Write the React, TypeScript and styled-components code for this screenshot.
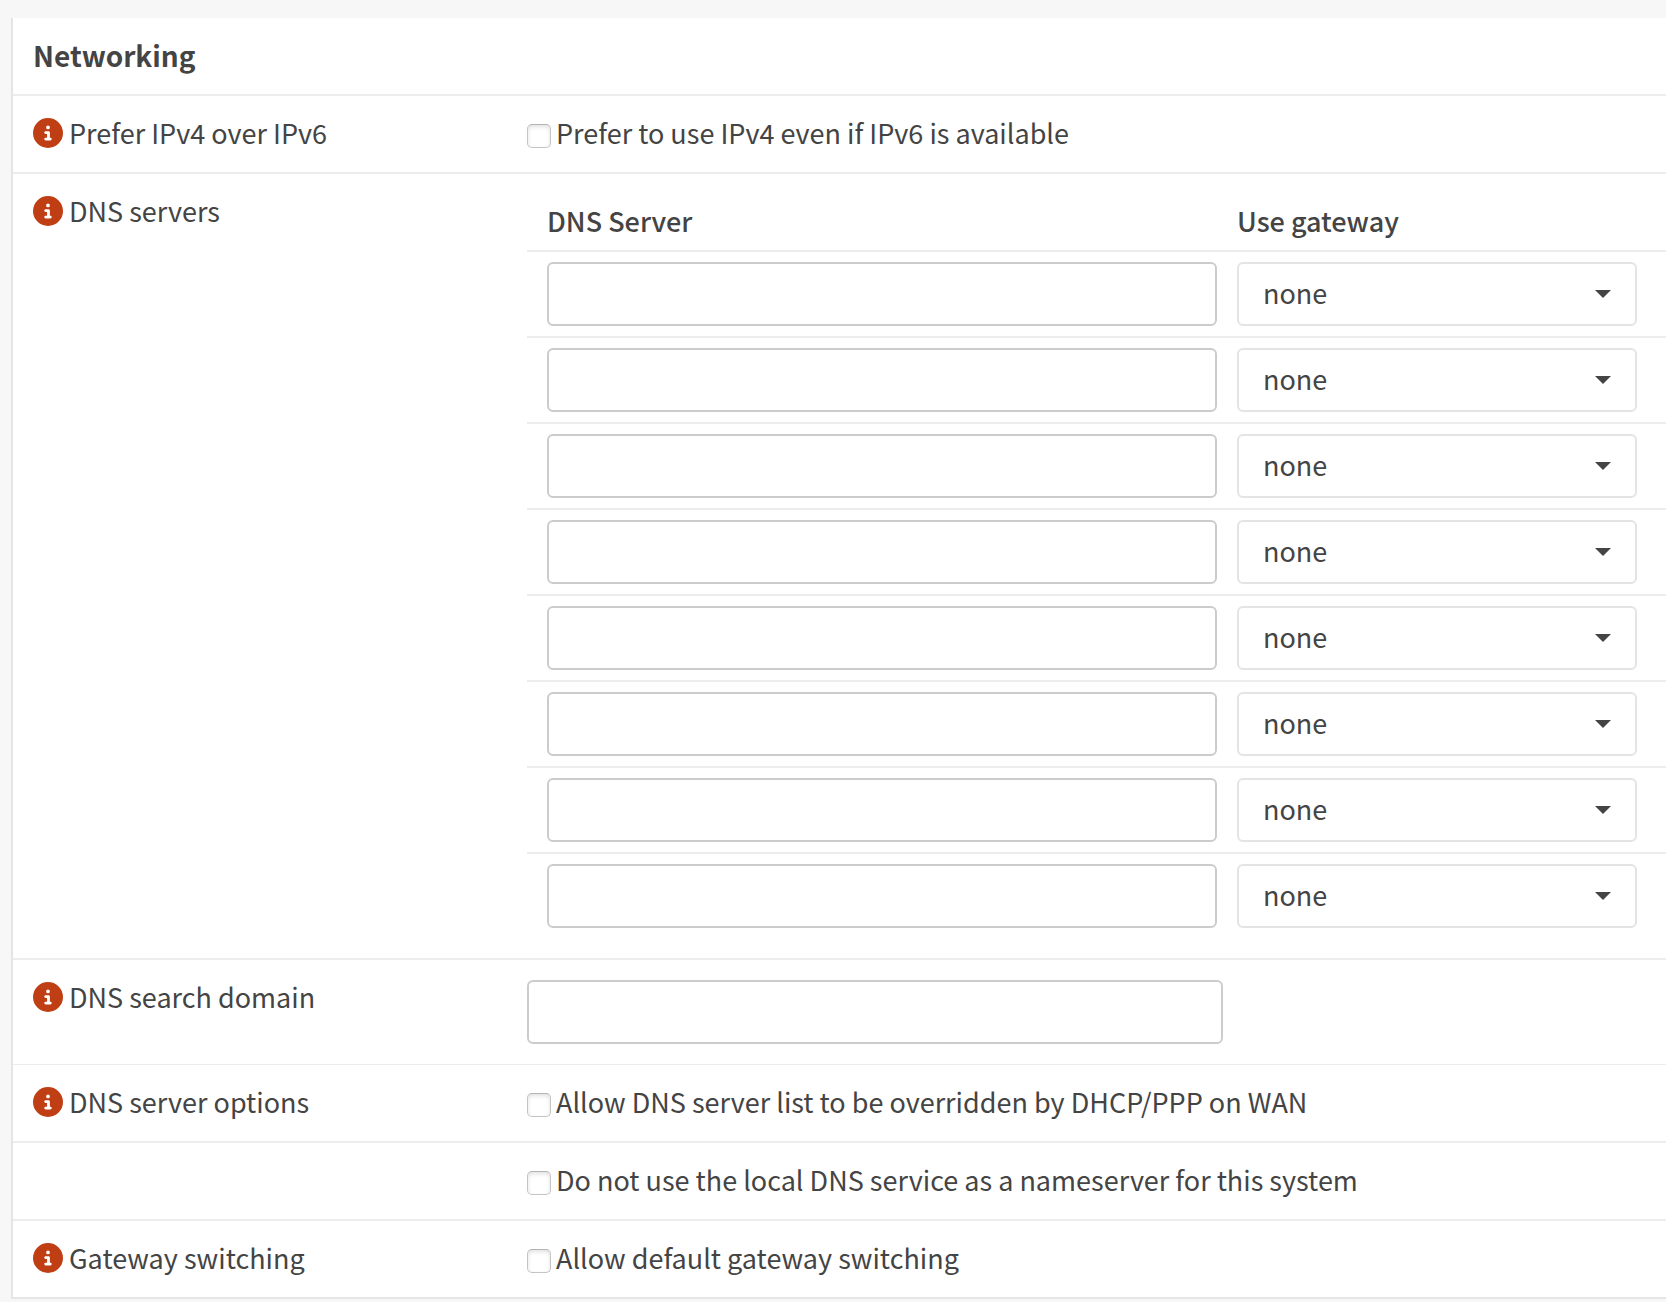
import React, { useId } from "react";
import styled, { createGlobalStyle } from "styled-components";
import { FaCircleInfo } from "react-icons/fa6";

const GlobalStyle = createGlobalStyle`
  *, *::before, *::after { box-sizing: border-box; }
  body {
    margin: 0;
    background: #f7f7f7;
    color: #444;
    font-family: "Noto Sans CJK SC", "Open Sans", sans-serif;
    font-size: 27px;
    line-height: 34px;
  }
`;

const Page = styled.main`
  padding: 18px 0 3px 11px;
`;

const Panel = styled.section`
  background: #fff;
  border-left: 2px solid #e5e5e5;
  border-bottom: 2px solid #e5e5e5;
`;

const PanelTitle = styled.h2`
  margin: 0;
  padding: 20px 20px 22px;
  font-size: 28px;
  line-height: 34px;
  font-weight: 700;
`;

const Row = styled.div<{ $line?: number }>`
  display: grid;
  grid-template-columns: 494px minmax(0, 1fr);
  align-items: start;
  min-height: ${(p) => 76 + (p.$line ?? 2)}px;
  padding: 20px 0 20px 20px;
  border-top: ${(p) => p.$line ?? 2}px solid #ededed;
`;

const RowLabel = styled.div`
  display: flex;
  align-items: flex-start;
  gap: 6px;
`;

const HelpButton = styled.button`
  display: flex;
  padding: 0;
  border: 0;
  background: none;
  color: #c03e14;
  cursor: pointer;
  margin-top: 2px;

  svg {
    width: 30px;
    height: 30px;
  }
`;

const CheckLabel = styled.label`
  display: flex;
  align-items: center;
  gap: 5px;
`;

const CheckBox = styled.input`
  appearance: none;
  width: 24px;
  height: 24px;
  margin: 6px 0 0;
  border: 1px solid #c4c4c4;
  border-top-color: #b4b4b4;
  border-radius: 5px;
  background: #fff;
  box-shadow: inset 0 2px 4px rgba(0, 0, 0, 0.12);

  &:checked {
    background: #c03e14;
  }
`;

const TextInput = styled.input`
  display: block;
  width: 100%;
  max-width: 696px;
  height: 64px;
  padding: 12px 24px;
  border: 2px solid #ccc;
  border-radius: 6px;
  background: #fff;
  color: inherit;
  font: inherit;
`;

const ServerTable = styled.table`
  width: 100%;
  border-collapse: separate;
  border-spacing: 0;
  table-layout: fixed;

  th {
    padding: 0 0 2px 20px;
    height: 56px;
    text-align: left;
    font-weight: 500;
  }

  td {
    padding: 10px 0 10px 20px;
    border-top: 2px solid #ededed;
  }
`;

const ServerColumn = styled.col`
  width: 690px;
`;

const SelectBox = styled.div`
  position: relative;
  width: 400px;

  &::after {
    content: "";
    position: absolute;
    top: 28px;
    right: 26px;
    border: 8px solid transparent;
    border-top-color: #444;
    border-bottom-width: 0;
    pointer-events: none;
  }
`;

const Select = styled.select`
  appearance: none;
  display: block;
  width: 100%;
  height: 64px;
  padding: 0 60px 2px 24px;
  border: 2px solid #e4e4e4;
  border-radius: 6px;
  background: #fff;
  color: inherit;
  font: inherit;
`;

function Label({ text, htmlFor }: { text: string; htmlFor?: string }) {
  return (
    <RowLabel>
      <HelpButton type="button" aria-label={`Help: ${text}`}>
        <FaCircleInfo />
      </HelpButton>
      {htmlFor ? <label htmlFor={htmlFor}>{text}</label> : <span>{text}</span>}
    </RowLabel>
  );
}

function Check({ text }: { text: string }) {
  const id = useId();
  return (
    <CheckLabel htmlFor={id}>
      <CheckBox id={id} type="checkbox" />
      <span>{text}</span>
    </CheckLabel>
  );
}

const servers = [1, 2, 3, 4, 5, 6, 7, 8];

export default function App() {
  return (
    <>
      <GlobalStyle />
      <Page>
        <Panel>
          <PanelTitle>Networking</PanelTitle>
          <Row>
            <Label text="Prefer IPv4 over IPv6" />
            <Check text="Prefer to use IPv4 even if IPv6 is available" />
          </Row>
          <Row>
            <Label text="DNS servers" />
            <ServerTable>
              <colgroup>
                <ServerColumn />
                <col />
              </colgroup>
              <thead>
                <tr>
                  <th scope="col">DNS Server</th>
                  <th scope="col">Use gateway</th>
                </tr>
              </thead>
              <tbody>
                {servers.map((n) => (
                  <tr key={n}>
                    <td>
                      <TextInput type="text" aria-label={`DNS server ${n}`} />
                    </td>
                    <td>
                      <SelectBox>
                        <Select aria-label={`Gateway for DNS server ${n}`}>
                          <option>none</option>
                        </Select>
                      </SelectBox>
                    </td>
                  </tr>
                ))}
              </tbody>
            </ServerTable>
          </Row>
          <Row>
            <Label text="DNS search domain" htmlFor="search-domain" />
            <TextInput id="search-domain" type="text" />
          </Row>
          <Row $line={1}>
            <Label text="DNS server options" />
            <Check text="Allow DNS server list to be overridden by DHCP/PPP on WAN" />
          </Row>
          <Row>
            <span />
            <Check text="Do not use the local DNS service as a nameserver for this system" />
          </Row>
          <Row>
            <Label text="Gateway switching" />
            <Check text="Allow default gateway switching" />
          </Row>
        </Panel>
      </Page>
    </>
  );
}
